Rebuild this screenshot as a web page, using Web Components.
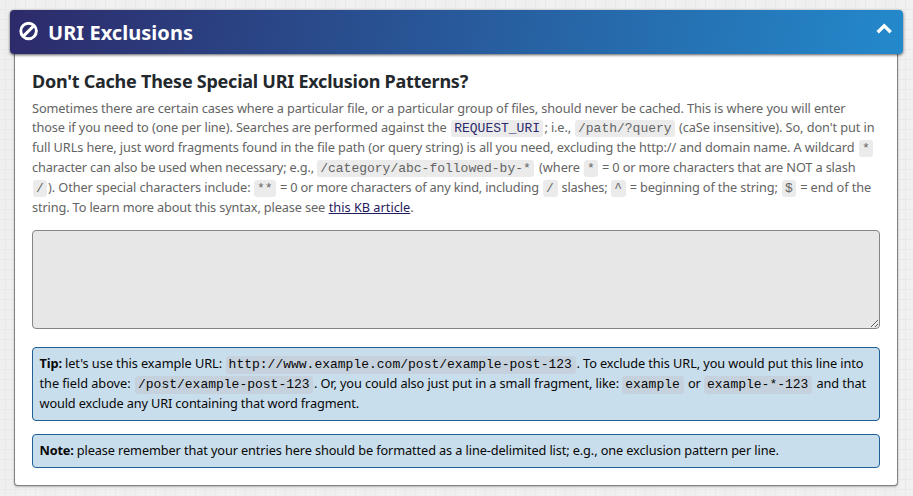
<!DOCTYPE html>
<html lang="en">
<head>
<meta charset="utf-8">
<title>URI Exclusions</title>
<style>
body{margin:0;height:496px;overflow:hidden;font-family:"Noto Sans","Open Sans",sans-serif;font-size:12.75px;color:#646464;
background-color:#f1f1f1;background-image:linear-gradient(90deg,transparent 5px,#e9e9e9 5px,#e9e9e9 6px,transparent 6px),linear-gradient(transparent 9px,#e9e9e9 9px,#e9e9e9 10px,transparent 10px),linear-gradient(90deg,#efefef 50%,transparent 50%);background-size:10px 10px,10px 10px,40px 40px}
</style>
</head>
<body>
<options-panel>
  <text-run slot="title" w="145">URI Exclusions</text-run>
  <text-run class="heading" w="436" style="font-size:18px;font-weight:700;color:#23282d;line-height:24px;margin-bottom:5px">Don't Cache These Special URI Exclusion Patterns?</text-run>
  <text-line style="height:19px"><text-run w="813.5">Sometimes there are certain cases where a particular file, or a particular group of files, should never be cached. This is where you will enter</text-run></text-line>
  <text-line><text-run w="414.7">those if you need to (one per line). Searches are performed against the</text-run><code-chip gap="4.5" w="92" style="color:#2b2a6c">REQUEST_URI</code-chip><text-run gap="1.3" w="26.5">; i.e.,</text-run><code-chip gap="4" w="99.6">/path/?query</code-chip><text-run gap="4.4" w="195.5">(caSe insensitive). So, don't put in</text-run></text-line>
  <text-line><text-run w="822.5">full URLs here, just word fragments found in the file path (or query string) is all you need, excluding the http:// and domain name. A wildcard</text-run><code-chip gap="4.5" w="14">*</code-chip></text-line>
  <text-line><text-run w="282">character can also be used when necessary; e.g.,</text-run><code-chip gap="3.2" w="217">/category/abc-followed-by-*</code-chip><text-run gap="4.8" w="41">(where</text-run><code-chip gap="4" w="14">*</code-chip><text-run gap="4" w="253.5">= 0 or more characters that are NOT a slash</text-run></text-line>
  <text-line><code-chip gap="1" w="14">/</code-chip><text-run gap="1" w="202.5">). Other special characters include:</text-run><code-chip gap="3.5" w="22">**</code-chip><text-run gap="4" w="259">= 0 or more characters of any kind, including</text-run><code-chip gap="4" w="14.5">/</code-chip><text-run gap="4" w="46">slashes;</text-run><code-chip gap="3.7" w="14.5">^</code-chip><text-run gap="4" w="148">= beginning of the string;</text-run><code-chip gap="4.3" w="14">$</code-chip><text-run gap="4.2" w="71">= end of the</text-run></text-line>
  <text-line><text-run w="293">string. To learn more about this syntax, please see</text-run><text-run link gap="3.7" w="81.6">this KB article</text-run><text-run w="3">.</text-run></text-line>
  <pattern-field></pattern-field>
  <info-box style="height:74px;margin-bottom:13px">
    <text-line><text-run w="22.5" style="font-weight:700">Tip:</text-run><text-run gap="3" w="157">let's use this example URL:</text-run><code-chip tip gap="3.6" w="350">http://www.example.com/post/example-post-123</code-chip><text-run gap="0.9" w="287">. To exclude this URL, you would put this line into</text-run></text-line>
    <text-line><text-run w="91">the field above:</text-run><code-chip tip gap="4.5" w="178">/post/example-post-123</code-chip><text-run gap="1" w="305">. Or, you could also just put in a small fragment, like:</text-run><code-chip tip gap="3.2" w="61.5">example</code-chip><text-run gap="4.3" w="12.5">or</text-run><code-chip tip gap="3.5" w="108">example-*-123</code-chip><text-run gap="4.5" w="49.5">and that</text-run></text-line>
    <text-line><text-run w="319.5">would exclude any URI containing that word fragment.</text-run></text-line>
  </info-box>
  <info-box style="height:34px">
    <text-line><text-run w="34" style="font-weight:700">Note:</text-run><text-run gap="3.3" w="702">please remember that your entries here should be formatted as a line-delimited list; e.g., one exclusion pattern per line.</text-run></text-line>
  </info-box>
</options-panel>
<script>
const shadow = (el, html) => { const r = el.attachShadow({mode:'open'}); r.innerHTML = html; return r; };

customElements.define('options-panel', class extends HTMLElement {
  constructor(){ super(); shadow(this, `<style>
    :host{display:block;padding:10px 10px 0}
    header{box-sizing:border-box;position:relative;display:flex;align-items:center;width:893px;height:44px;padding:0 11px 0 9px;border-radius:4px;color:#fff;
      font-size:20px;font-weight:700;line-height:30px;background:linear-gradient(100deg,#2d2a6a 0%,#2389cb 100%);box-shadow:0 1px 3px rgba(0,0,0,.65)}
    .ban{width:20px;height:20px;margin:-2px 9px 0 0}
    .up{width:16px;height:11px;margin:-7px 0 0 auto}
    main{box-sizing:border-box;display:block;width:884px;height:432px;margin-left:4px;padding:15px 17px 0;background:#fff;border:1px solid #828282;border-top:0;border-radius:0 0 4px 4px;box-shadow:0 1px 2px rgba(0,0,0,.25)}
  </style>
  <header><svg class="ban" viewBox="0 0 20 20" fill="none" stroke="#fff" stroke-width="2.9"><circle cx="9.6" cy="10" r="7.8"/><path d="M4.2 15.4 15 4.6"/></svg>
  <slot name="title"></slot>
  <svg class="up" viewBox="0 0 16 11" fill="none" stroke="#fff" stroke-width="3.4"><path d="M1.7 9.3 8.2 2.9 14.7 9.3"/></svg></header>
  <main><slot></slot></main>`); }
});

customElements.define('text-line', class extends HTMLElement {
  constructor(){ super(); shadow(this, `<style>:host{display:flex;align-items:baseline;height:20px;white-space:nowrap}</style><slot></slot>`); }
});

/* A run of text whose tracking is set so that it fills the width it is given. */
customElements.define('text-run', class extends HTMLElement {
  constructor(){ super(); shadow(this, `<style>:host{display:block;flex:none;line-height:20px;white-space:nowrap}
    :host([slot=title]){line-height:30px;padding-top:2px}
    :host([link]){color:#1f1b5e}:host([link]) span{text-decoration:underline;text-decoration-thickness:1px;text-underline-offset:1px;text-decoration-skip-ink:none}
    span{display:inline-block}</style><span><slot></slot></span>`); }
  connectedCallback(){
    const w = +this.getAttribute('w');
    this.style.width = w + 'px';
    this.style.marginLeft = (this.getAttribute('gap') || 0) + 'px';
    const natural = this.shadowRoot.querySelector('span').getBoundingClientRect().width;
    this.style.letterSpacing = (w - natural) / this.textContent.length + 'px';
  }
});

customElements.define('code-chip', class extends HTMLElement {
  constructor(){ super(); shadow(this, `<style>:host{display:block;flex:none;box-sizing:border-box;height:17px;padding:0 3px;border-radius:3px;background:#ebebeb;font:13px/17px "Liberation Mono",monospace;white-space:nowrap}
    :host([tip]){height:18px;background:#c5d2de}</style><slot></slot>`); }
  connectedCallback(){
    this.style.width = this.getAttribute('w') + 'px';
    this.style.marginLeft = (this.getAttribute('gap') || 0) + 'px';
  }
});

customElements.define('pattern-field', class extends HTMLElement {
  constructor(){ super(); shadow(this, `<style>:host{display:block;height:99px;margin:13px 0 18px}
    textarea{display:block;box-sizing:border-box;width:848px;height:99px;margin:0;border:1px solid #858585;border-radius:4px;background:#e7e7e7;outline:0;resize:vertical}</style><textarea></textarea>`); }
});

customElements.define('info-box', class extends HTMLElement {
  constructor(){ super(); shadow(this, `<style>:host{display:block;box-sizing:border-box;padding:5px 6.5px;border:1px solid #205f96;border-radius:4px;background:#c9deec;color:#080808}</style><slot></slot>`); }
});
</script>
</body>
</html>
